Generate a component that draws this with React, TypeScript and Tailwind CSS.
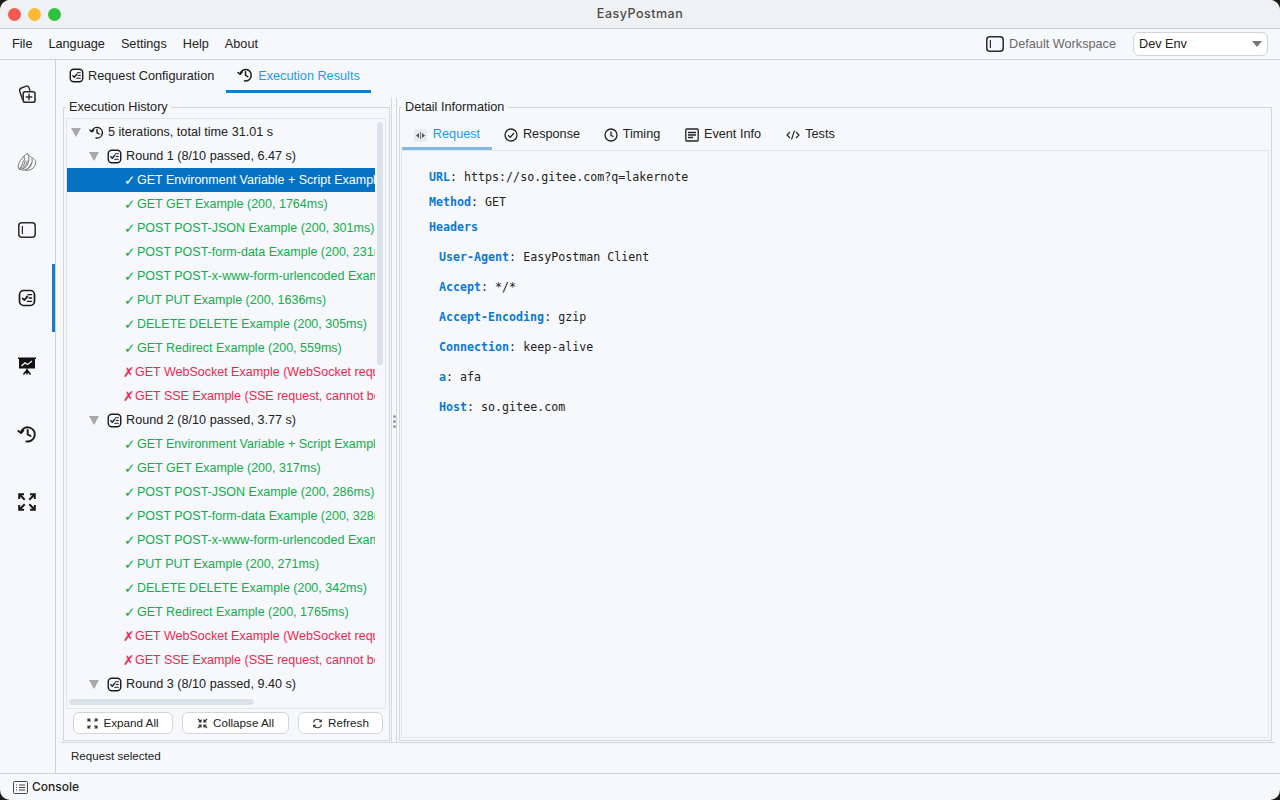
import { ReactNode } from 'react';

const ui = "font-['Liberation_Sans','Noto_Sans',sans-serif]";

function CheckListIcon({ size = 18 }: { size?: number }) {
  return (
    <svg width={size} height={size} viewBox="0 0 18 18" fill="none" stroke="#1a1a1a" strokeWidth="1.7" strokeLinecap="round" strokeLinejoin="round">
      <rect x="1.5" y="1.5" width="15" height="15" rx="4.2" />
      <path d="M4.6 9.3l1.8 1.8 3-3.7" />
      <path d="M10 5.7h3.6M11 9h2.6M9.200 12.300h4.400" strokeWidth="1.3" />
    </svg>
  );
}

function HistoryIcon({ size = 18, color = '#1a1a1a' }: { size?: number; color?: string }) {
  return (
    <svg width={size} height={size} viewBox="0 0 18 18" fill="none" stroke={color} strokeWidth="1.7" strokeLinecap="round" strokeLinejoin="round">
      <path d="M3.6 7.2A6.4 6.4 0 1 1 8.4 15.6" />
      <path d="M1.2 6.2l2.5 2 2-2.5" />
      <path d="M9.6 5.4v4l2.6 1.4" />
    </svg>
  );
}

function PanelIcon({ w = 18, h = 16 }: { w?: number; h?: number }) {
  return (
    <svg width={w} height={h} viewBox="0 0 18 16" fill="none" stroke="#2b2b2b" strokeWidth="1.5">
      <rect x="0.800" y="0.800" width="16.400" height="14.400" rx="3" />
      <path d="M4.400 4v8" strokeWidth="1.200" />
    </svg>
  );
}

function Triangle() {
  return <div className="w-0 h-0 border-l-[5px] border-r-[5px] border-t-[9px] border-l-transparent border-r-transparent border-t-[#a9a9a9]" />;
}

function SideItem({ children, active }: { children: ReactNode; active?: boolean }) {
  return (
    <div className={`h-[68px] flex items-center justify-center ${active ? 'border-r-[3px] border-[#0f7fd0] pl-[2px]' : 'pr-[1px]'}`}>
      {children}
    </div>
  );
}

function FieldsetTitle({ children }: { children: ReactNode }) {
  return <span className="absolute -top-[11px] left-[2px] bg-[#f6f8fc] px-[3px] text-[12.7px] leading-[20px] text-[#222]">{children}</span>;
}

type Req = { ok: boolean; text: string };

const round1: Req[] = [
  { ok: true, text: 'GET Environment Variable + Script Example (200, 1200ms)' },
  { ok: true, text: 'GET GET Example (200, 1764ms)' },
  { ok: true, text: 'POST POST-JSON Example (200, 301ms)' },
  { ok: true, text: 'POST POST-form-data Example (200, 231ms)' },
  { ok: true, text: 'POST POST-x-www-form-urlencoded Example (200, 300ms)' },
  { ok: true, text: 'PUT PUT Example (200, 1636ms)' },
  { ok: true, text: 'DELETE DELETE Example (200, 305ms)' },
  { ok: true, text: 'GET Redirect Example (200, 559ms)' },
  { ok: false, text: 'GET WebSocket Example (WebSocket request not supported)' },
  { ok: false, text: 'GET SSE Example (SSE request, cannot be run)' },
];

const round2: Req[] = [
  { ok: true, text: 'GET Environment Variable + Script Example (200, 300ms)' },
  { ok: true, text: 'GET GET Example (200, 317ms)' },
  { ok: true, text: 'POST POST-JSON Example (200, 286ms)' },
  { ok: true, text: 'POST POST-form-data Example (200, 328ms)' },
  { ok: true, text: 'POST POST-x-www-form-urlencoded Example (200, 300ms)' },
  { ok: true, text: 'PUT PUT Example (200, 271ms)' },
  { ok: true, text: 'DELETE DELETE Example (200, 342ms)' },
  { ok: true, text: 'GET Redirect Example (200, 1765ms)' },
  { ok: false, text: 'GET WebSocket Example (WebSocket request not supported)' },
  { ok: false, text: 'GET SSE Example (SSE request, cannot be run)' },
];

function ReqRow({ req, selected }: { req: Req; selected?: boolean }) {
  const color = selected ? 'bg-[#0672c4] text-white' : req.ok ? 'text-[#12ad4c]' : 'text-[#f0264f]';
  return (
    <div className={`h-6 shrink-0 flex items-center whitespace-nowrap overflow-hidden text-[12.5px] ${req.ok ? 'pl-[57px]' : 'pl-[56px]'} ${color}`}>
      <span className={`shrink-0 font-['DejaVu_Sans',sans-serif] text-[13.5px] font-bold ${req.ok ? 'w-[13px]' : 'w-[12px]'}`}>{req.ok ? '✓' : '✗'}</span>
      {req.text}
    </div>
  );
}

function RoundRow({ label }: { label: string }) {
  return (
    <div className="h-6 shrink-0 flex items-center pl-[22px] whitespace-nowrap text-[12.65px] text-[#222]">
      <Triangle />
      <span className="ml-[8px] mr-[4px]"><CheckListIcon size={15} /></span>
      {label}
    </div>
  );
}

function SmallBtn({ icon, label, className }: { icon: ReactNode; label: string; className: string }) {
  return (
    <div className={`h-[22px] flex items-center justify-center gap-[5px] rounded-[6px] border border-[#d2d5da] bg-white text-[11.7px] text-[#222] ${className}`}>
      {icon}
      {label}
    </div>
  );
}

function DetailTab({ icon, label, active, className }: { icon: ReactNode; label: string; active?: boolean; className: string }) {
  return (
    <div className={`h-[31px] pt-[4px] flex items-center justify-center gap-[5px] text-[12.7px] border-b-[3px] ${active ? 'text-[#1a9bf0] border-[#86b9e0]' : 'text-[#222] border-transparent'} ${className}`}>
      {icon}
      {label}
    </div>
  );
}

function Kv({ k, v, nested }: { k: string; v?: string; nested?: boolean }) {
  return (
    <div className={`flex items-center whitespace-pre ${nested ? 'pl-[10px] h-[30px]' : 'h-[25px]'}`}>
      <span className="font-bold text-[#0a79d6]">{k}</span>
      {v !== undefined && <span>: {v}</span>}
    </div>
  );
}

export default function App() {
  return (
    <div className="w-[1280px] h-[800px] bg-[#1b1b1b]">
      <div className={`w-full h-full flex flex-col overflow-hidden rounded-[10px] bg-[#f6f8fc] ${ui}`}>
        {/* title bar */}
        <div className="h-[29px] shrink-0 relative flex items-center justify-center bg-[#f0f1f3] border-b border-[#c6c7c9] font-['Inter',sans-serif] text-[12.5px] font-medium tracking-[0.5px] text-[#4a4a4a]">
          <div className="absolute left-[8px] top-[8px] flex gap-[7px]">
            <span className="w-[13px] h-[13px] rounded-full bg-[#f35b52]" />
            <span className="w-[13px] h-[13px] rounded-full bg-[#fbb935]" />
            <span className="w-[13px] h-[13px] rounded-full bg-[#2cc240]" />
          </div>
          EasyPostman
        </div>

        {/* menu bar */}
        <div className="h-[31px] shrink-0 flex items-center pl-3 pr-3 border-b border-[#cfd1d4] text-[12.7px] text-[#222]">
          <div className="flex pt-[2px]">
            <span>File</span>
            <span className="ml-[16px]">Language</span>
            <span className="ml-[16px]">Settings</span>
            <span className="ml-[16px]">Help</span>
            <span className="ml-[16px]">About</span>
          </div>
          <div className="ml-auto flex items-center">
            <PanelIcon />
            <span className="ml-[5px] pt-[2px] text-[#6a6a6a]">Default Workspace</span>
            <div className="ml-[17px] w-[135px] h-[24px] rounded-[6px] border border-[#d2d5da] bg-white flex items-center justify-between pl-[5px] pr-[5px] text-[#222]">
              <span className="pt-[2px]">Dev Env</span>
              <div className="w-0 h-0 border-l-[5px] border-r-[5px] border-t-[6px] border-l-transparent border-r-transparent border-t-[#777]" />
            </div>
          </div>
        </div>

        <div className="flex-1 flex min-h-0">
          {/* left icon rail */}
          <div className="w-[56px] shrink-0 border-r border-[#cfd1d4] flex flex-col">
            <SideItem>
              <svg width="20" height="20" viewBox="0 0 20 20" fill="none" stroke="#2b2b2b" strokeWidth="1.4" strokeLinejoin="round" strokeLinecap="round">
                <path d="M5.500 15.500L2.800 7.500C2.200 5.800 3 4.600 4.400 4L8.600 2.300C10 1.800 11.400 2.300 12 3.800L13 6.500" />
                <path d="M6.200 9.800C6.200 8.500 7 7.800 8.200 7.800H15.800C17.200 7.800 18 8.600 18 9.800V16.200C18 17.600 17.200 18.300 15.800 18.300H8.200C7 18.300 6.200 17.500 6.200 16.200z" strokeWidth="1.600" />
                <path d="M12 10.200v5.600M9.200 13h5.600" />
              </svg>
            </SideItem>
            <SideItem>
              <svg width="20" height="20" viewBox="0 0 20 20" fill="none" stroke="#6a6a6a" strokeWidth="0.900" strokeLinejoin="round">
                <path d="M1.200 14.200C1.200 9.800 5 7.200 6.800 4.200 8.200 7 8.400 10 6.800 13 5.600 15.200 3.800 17 2.400 17.600 1.600 16.800 1.200 15.400 1.200 14.200z" />
                <path d="M6.800 4.200C8 3.200 9.600 2 10.600 1.400 12.400 5 12.400 9.400 10.400 13 9 15.400 6.400 17.400 2.400 17.600" />
                <path d="M11.700 3.200C13.400 4.200 14.400 5.200 15 6.400 15.800 10 14.400 14 11.600 16.200 9.800 17.600 7.600 18.200 5 18.200" />
                <path d="M15.300 5.600C17 6.800 18.400 8.200 18.800 9.800 18.800 13 17 16 14.200 17.400 12.400 18.200 10 18.400 8 18.200" />
                <path d="M2.400 17.600C4.800 13.800 5.600 11 6.600 8.400M5.400 17.400C8 14.600 9.400 12 10.400 8.600M9 18C11.800 16 13.600 13.600 14.600 10.800" />
              </svg>
            </SideItem>
            <SideItem><PanelIcon /></SideItem>
            <SideItem active><CheckListIcon /></SideItem>
            <SideItem>
              <svg width="20" height="20" viewBox="0 0 20 20" fill="none">
                <path d="M1 1.500h18v1.500h-1v9.500H2V3H1z" fill="#111" />
                <path d="M4.500 10l3.500-3.200 2.500 1.800L15 5" stroke="#fff" strokeWidth="1.200" />
                <path d="M10 12.500v6M10 14l-3.500 4.500M10 14l3.500 4.500" stroke="#111" strokeWidth="1.500" />
              </svg>
            </SideItem>
            <SideItem><HistoryIcon size={20} /></SideItem>
            <SideItem>
              <svg width="18" height="18" viewBox="0 0 18 18" fill="none" stroke="#1a1a1a" strokeWidth="2" strokeLinecap="square">
                <path d="M1.200 5V1.200H5M1.500 1.500L6 6M16.800 5V1.200H13M16.500 1.500L12 6M1.200 13v3.800H5M1.500 16.500L6 12M16.800 13v3.800H13M16.500 16.500L12 12" />
              </svg>
            </SideItem>
          </div>

          {/* main */}
          <div className="flex-1 min-w-0 flex flex-col">
            {/* top tabs */}
            <div className="h-[33px] shrink-0 flex items-start pl-[13px] text-[12.7px]">
              <div className="h-[33px] pb-[3px] w-[157px] flex items-center gap-[4px]">
                <CheckListIcon size={15} />
                <span className="pt-[3px] text-[#222]">Request Configuration</span>
              </div>
              <div className="h-[33px] w-[145px] flex items-center justify-center gap-[5px] border-b-[3px] border-[#0f7fd0] text-[#1a9bf0]">
                <HistoryIcon size={16} />
                <span className="pt-[3px]">Execution Results</span>
              </div>
            </div>

            <div className="flex-1 min-h-0 flex mx-[5px] pt-[5px] border-b border-[#d5d7da]">
              {/* history panel */}
              <div className="w-[327px] shrink-0 relative mt-[9px] mb-[1px] ml-[2px] border border-[#d5d7da] flex flex-col pl-[2px] pr-[3px] pt-[10px]">
                <FieldsetTitle>Execution History</FieldsetTitle>
                <div className="flex-1 min-h-0 relative border border-[#e4e6ea] overflow-hidden pr-[10px]">
                  <div className="h-full overflow-hidden flex flex-col pt-[1px]">
                    <div className="h-6 shrink-0 flex items-center pl-[4px] whitespace-nowrap text-[12.65px] text-[#222]">
                      <Triangle />
                      <span className="ml-[8px] mr-[4px]"><HistoryIcon size={15} /></span>
                      5 iterations, total time 31.01 s
                    </div>
                    <RoundRow label="Round 1 (8/10 passed, 6.47 s)" />
                    {round1.map((r, i) => <ReqRow key={i} req={r} selected={i === 0} />)}
                    <RoundRow label="Round 2 (8/10 passed, 3.77 s)" />
                    {round2.map((r, i) => <ReqRow key={i} req={r} />)}
                    <RoundRow label="Round 3 (8/10 passed, 9.40 s)" />
                  </div>
                  <div className="absolute right-[2px] top-[3px] w-[6px] h-[243px] rounded-full bg-[#dce2ea]" />
                  <div className="absolute left-[2px] bottom-[3px] w-[185px] h-[6px] rounded-full bg-[#dce2ea]" />
                </div>
                <div className="h-[31px] shrink-0 flex items-start gap-[9px] pt-[3px] pl-[7px]">
                  <SmallBtn className="w-[100px]" label="Expand All" icon={
                    <svg width="11" height="11" viewBox="0 0 11 11" fill="none" stroke="#333" strokeWidth="1.200"><path d="M1 3.500V1h2.500M1 1l2.500 2.500M10 3.500V1H7.500M10 1L7.500 3.500M1 7.500V10h2.500M1 10l2.500-2.500M10 7.500V10H7.500M10 10L7.500 7.500" /></svg>
                  } />
                  <SmallBtn className="w-[107px]" label="Collapse All" icon={
                    <svg width="11" height="11" viewBox="0 0 11 11" fill="none" stroke="#333" strokeWidth="1.200"><path d="M1.500 4H4V1.500M4 4L1 1M9.500 4H7V1.500M7 4l3-3M1.500 7H4v2.500M4 7l-3 3M9.500 7H7v2.500M7 7l3 3" /></svg>
                  } />
                  <SmallBtn className="w-[85px]" label="Refresh" icon={
                    <svg width="11" height="11" viewBox="0 0 11 11" fill="none" stroke="#333" strokeWidth="1.100"><path d="M1.500 4.500A4 4 0 0 1 9 3.500M9.500 6.500A4 4 0 0 1 2 7.500M9.300 1.500v2.200H7.100M1.700 9.500V7.300h2.200" /></svg>
                  } />
                </div>
              </div>

              {/* split handle */}
              <div className="w-[6px] shrink-0 relative ml-[1px] mr-[2px] border-x border-[#d5d7da]">
                <div className="absolute left-[0.500px] top-[317px] flex flex-col gap-[2px]">
                  <span className="w-[3px] h-[3px] rounded-full bg-[#9a9a9a]" />
                  <span className="w-[3px] h-[3px] rounded-full bg-[#9a9a9a]" />
                  <span className="w-[3px] h-[3px] rounded-full bg-[#9a9a9a]" />
                </div>
              </div>

              {/* detail panel */}
              <div className="flex-1 min-w-0 relative mt-[9px] mb-[1px] mr-[3px] border border-[#d5d7da] flex flex-col pl-[1px] pr-[2px] pb-[2px] pt-[11px]">
                <FieldsetTitle>Detail Information</FieldsetTitle>
                <div className="h-[32px] shrink-0 flex items-start border-b border-[#e4e6ea] pl-[1px]">
                  <DetailTab className="w-[90px]" active label="Request" icon={
                    <span className="w-[13px] h-[13px] mr-[1px] rounded-[2px] bg-[#e9ebee] flex items-center justify-center">
                      <svg width="9" height="7" viewBox="0 0 9 7" fill="#555"><path d="M0 3.500L3 1v5zM9 3.500L6 1v5zM4.100 0h.800v7h-.800z" /></svg>
                    </span>
                  } />
                  <DetailTab className="w-[100px]" label="Response" icon={
                    <svg width="14" height="14" viewBox="0 0 14 14" fill="none" stroke="#222" strokeWidth="1.300"><circle cx="7" cy="7" r="6" /><path d="M4 7.200l2.200 2.200L10 5" /></svg>
                  } />
                  <DetailTab className="w-[80px]" label="Timing" icon={
                    <svg width="14" height="14" viewBox="0 0 14 14" fill="none" stroke="#222" strokeWidth="1.300"><circle cx="7" cy="7" r="6" /><path d="M7 3.500V7.500l2.500 1" /></svg>
                  } />
                  <DetailTab className="w-[102px]" label="Event Info" icon={
                    <svg width="14" height="14" viewBox="0 0 14 14" fill="none" stroke="#222" strokeWidth="1.300"><rect x="0.800" y="1" width="12.400" height="12" rx="1" /><path d="M3 4.500h8M3 7h8M3 9.500h5" /></svg>
                  } />
                  <DetailTab className="w-[73px]" label="Tests" icon={
                    <svg width="14" height="12" viewBox="0 0 14 12" fill="none" stroke="#222" strokeWidth="1.100"><path d="M4 3L1 6l3 3M10 3l3 3-3 3M8.500 1.500l-3 9" /></svg>
                  } />
                </div>
                <div className="flex-1 border border-t-0 border-[#e4e6ea] pl-[27px] pt-[14px] font-['DejaVu_Sans_Mono','Liberation_Mono',monospace] text-[11.650px] text-[#222]">
                  <Kv k="URL" v="https://so.gitee.com?q=lakernote" />
                  <Kv k="Method" v="GET" />
                  <Kv k="Headers" />
                  <div className="h-[3px]" />
                  <Kv nested k="User-Agent" v="EasyPostman Client" />
                  <Kv nested k="Accept" v="*/*" />
                  <Kv nested k="Accept-Encoding" v="gzip" />
                  <Kv nested k="Connection" v="keep-alive" />
                  <Kv nested k="a" v="afa" />
                  <Kv nested k="Host" v="so.gitee.com" />
                </div>
              </div>
            </div>

            {/* status */}
            <div className="h-[30px] shrink-0 flex items-center pb-[4px] pl-[15px] text-[11.6px] text-[#222]">
              Request selected
            </div>
          </div>
        </div>

        {/* console */}
        <div className="h-[27px] shrink-0 flex items-center pl-[13px] gap-[4px] border-t border-[#cfd1d4] font-['Inter',sans-serif] text-[12px] font-medium text-[#222]">
          <svg width="15" height="13" viewBox="0 0 15 13" fill="none" stroke="#444" strokeWidth="1"><rect x="0.500" y="0.500" width="14" height="12" rx="1" /><path d="M3 4h1M6 4h6M3 6.500h1M6 6.500h6M3 9h1M6 9h6" /></svg>
          Console
        </div>
      </div>
    </div>
  );
}
